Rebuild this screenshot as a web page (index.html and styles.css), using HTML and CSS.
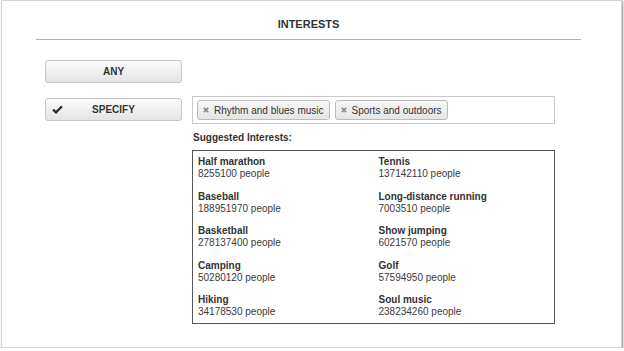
FILE: index.html
```html
<!DOCTYPE html>
<html lang="en">
<head>
    <meta charset="UTF-8">
    <meta name="viewport" content="width=device-width, initial-scale=1.0">
    <title>Interests</title>
    <link rel="stylesheet" href="styles.css">
</head>
<body>
    <div class="panel">
        <div class="header">
            <h1>INTERESTS</h1>
        </div>

        <div class="choice-grid">
            <button class="choice-btn">ANY</button>
            <div></div>

            <button class="choice-btn selected">
                <svg class="check" width="11" height="9" viewBox="0 0 11 9">
                    <path d="M1 4.6 L4 7.4 L10 1.2" fill="none" stroke="#2b2b2b" stroke-width="2.3"/>
                </svg>
                SPECIFY
            </button>
            <div class="specify">
                <div class="tag-box">
                    <span class="tag">
                        <svg width="6" height="6" viewBox="0 0 6 6"><path d="M0.8 0.8 L5.2 5.2 M5.2 0.8 L0.8 5.2" stroke="#8c8c8c" stroke-width="1.7"/></svg>
                        Rhythm and blues music
                    </span>
                    <span class="tag">
                        <svg width="6" height="6" viewBox="0 0 6 6"><path d="M0.8 0.8 L5.2 5.2 M5.2 0.8 L0.8 5.2" stroke="#8c8c8c" stroke-width="1.7"/></svg>
                        Sports and outdoors
                    </span>
                </div>

                <div class="suggest-label">Suggested Interests:</div>

                <div class="suggest-box">
                    <div class="item"><b>Half marathon</b><span>8255100 people</span></div>
                    <div class="item"><b>Tennis</b><span>137142110 people</span></div>
                    <div class="item"><b>Baseball</b><span>188951970 people</span></div>
                    <div class="item"><b>Long-distance running</b><span>7003510 people</span></div>
                    <div class="item"><b>Basketball</b><span>278137400 people</span></div>
                    <div class="item"><b>Show jumping</b><span>6021570 people</span></div>
                    <div class="item"><b>Camping</b><span>50280120 people</span></div>
                    <div class="item"><b>Golf</b><span>57594950 people</span></div>
                    <div class="item"><b>Hiking</b><span>34178530 people</span></div>
                    <div class="item"><b>Soul music</b><span>238234260 people</span></div>
                </div>
            </div>
        </div>
    </div>
</body>
</html>
```

FILE: styles.css
```css
body {
    margin: 0;
    background: white;
    font-family: "Liberation Sans", Arial, sans-serif;
    font-size: 10px;
    color: #333;
}
.panel {
    box-sizing: border-box;
    margin: 0 2px 0 1px;
    height: 348px;
    background: white;
    border: 1px solid #d4d4d4;
    box-shadow: 1px 1px 2px rgba(0,0,0,0.45);
}
.header {
    margin: 0 40px 0 34px;
    padding-top: 16px;
    border-bottom: 1px solid #b3b3b3;
}
h1 {
    margin: 0 0 8px;
    font-size: 11px;
    line-height: 14px;
    text-align: center;
    color: #333;
}
.choice-grid {
    display: grid;
    grid-template-columns: 137px 363px;
    column-gap: 10px;
    row-gap: 13px;
    margin: 20px 0 0 43px;
    align-items: start;
}
.choice-btn {
    position: relative;
    height: 23px;
    border: 1px solid #c6c6c6;
    border-radius: 3px;
    background: linear-gradient(#fbfbfb, #e4e4e4);
    font-family: "Liberation Sans", Arial, sans-serif;
    font-size: 10px;
    font-weight: bold;
    color: #333;
    padding: 0;
}
.choice-btn.selected {
    margin-top: 2px;
}
.check {
    position: absolute;
    left: 6px;
    top: 6px;
}
.tag-box {
    box-sizing: border-box;
    height: 28px;
    border: 1px solid #c8c8c8;
    padding: 3px 4px;
    display: flex;
    gap: 5px;
}
.tag {
    display: inline-flex;
    align-items: center;
    gap: 5px;
    height: 20px;
    box-sizing: border-box;
    padding: 0 5px 0 5px;
    border: 1px solid #bcbcbc;
    border-radius: 3px;
    background: linear-gradient(#f6f6f6, #e5e5e5);
    font-size: 10px;
    color: #333;
}
.suggest-label {
    margin: 8px 0 6px 1px;
    font-weight: bold;
    line-height: 12px;
}
.suggest-box {
    box-sizing: border-box;
    width: 363px;
    border: 1px solid #555;
    padding: 5px 0 5px;
    display: grid;
    grid-template-columns: 1fr 1fr;
    row-gap: 10.5px;
}
.item {
    padding-left: 5px;
    line-height: 12px;
}
.item b {
    display: block;
    color: #333;
}
.item span {
    display: block;
    color: #3a3a3a;
}
```
